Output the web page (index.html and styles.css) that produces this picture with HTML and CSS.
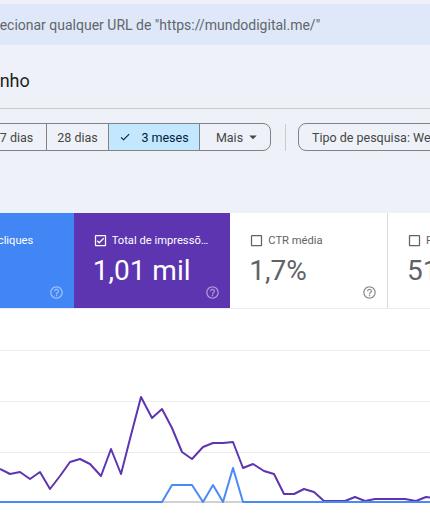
FILE: index.html
```html
<!DOCTYPE html>
<html lang="pt">
<head>
<meta charset="utf-8">
<title>Desempenho</title>
<link rel="stylesheet" href="styles.css">
</head>
<body>
<div class="page">
  <div class="url-bar">
    <span class="url-text">Inspecionar qualquer URL de "https://mundodigital.me/"</span>
  </div>

  <h1 class="title">Desempenho</h1>
  <div class="divider"></div>

  <div class="filters">
    <div class="segmented">
      <div class="seg seg-1">7 dias</div>
      <div class="seg seg-2">28 dias</div>
      <div class="seg seg-3 selected">
        <svg class="seg-check" viewBox="0 0 24 24"><path d="M9 16.17L4.83 12l-1.42 1.41L9 19 21 7l-1.41-1.41z"/></svg>
        <span>3 meses</span>
      </div>
      <div class="seg seg-4">
        <span>Mais</span>
        <svg class="seg-arrow" viewBox="0 0 24 24"><path d="M7 10l5 5 5-5z"/></svg>
      </div>
    </div>
    <div class="vdivider"></div>
    <div class="chip">Tipo de pesquisa: Web</div>
  </div>

  <div class="panel">
    <div class="cards">
      <div class="card card-clicks">
        <div class="card-label">
          <svg class="cb" viewBox="0 0 24 24"><path d="M19 3H5c-1.11 0-2 .9-2 2v14c0 1.1.89 2 2 2h14c1.11 0 2-.9 2-2V5c0-1.1-.89-2-2-2zm0 16H5V5h14v14zM17.99 9l-1.41-1.42-6.59 6.59-2.58-2.57-1.42 1.41 4 3.99z"/></svg>
          <span class="label-text">Total de cliques</span>
        </div>
        <div class="card-value">17</div>
        <svg class="help" viewBox="0 0 24 24"><path d="M11 18h2v-2h-2v2zm1-16C6.480 2 2 6.48 2 12s4.48 10 10 10 10-4.48 10-10S17.52 2 12 2zm0 18c-4.41 0-8-3.59-8-8s3.59-8 8-8 8 3.59 8 8-3.59 8-8 8zm0-14c-2.21 0-4 1.79-4 4h2c0-1.1.9-2 2-2s2 .9 2 2c0 2-3 1.75-3 5h2c0-2.250 3-2.5 3-5 0-2.21-1.79-4-4-4z"/></svg>
      </div>
      <div class="card card-impr">
        <div class="card-label">
          <svg class="cb" viewBox="0 0 24 24"><path d="M19 3H5c-1.11 0-2 .9-2 2v14c0 1.1.89 2 2 2h14c1.11 0 2-.9 2-2V5c0-1.1-.89-2-2-2zm0 16H5V5h14v14zM17.99 9l-1.41-1.42-6.59 6.59-2.58-2.57-1.42 1.41 4 3.99z"/></svg>
          <span class="label-text">Total de impressões</span>
        </div>
        <div class="card-value">1,01 mil</div>
        <svg class="help" viewBox="0 0 24 24"><path d="M11 18h2v-2h-2v2zm1-16C6.48 2 2 6.48 2 12s4.48 10 10 10 10-4.48 10-10S17.52 2 12 2zm0 18c-4.41 0-8-3.59-8-8s3.59-8 8-8 8 3.59 8 8-3.59 8-8 8zm0-14c-2.21 0-4 1.79-4 4h2c0-1.1.9-2 2-2s2 .9 2 2c0 2-3 1.75-3 5h2c0-2.25 3-2.5 3-5 0-2.21-1.79-4-4-4z"/></svg>
      </div>
      <div class="card card-ctr">
        <div class="card-label">
          <svg class="cb" viewBox="0 0 24 24"><path d="M19 5v14H5V5h14m0-2H5c-1.1 0-2 .9-2 2v14c0 1.1.9 2 2 2h14c1.1 0 2-.9 2-2V5c0-1.1-.9-2-2-2z"/></svg>
          <span class="label-text">CTR média</span>
        </div>
        <div class="card-value">1,7%</div>
        <svg class="help" viewBox="0 0 24 24"><path d="M11 18h2v-2h-2v2zm1-16C6.48 2 2 6.48 2 12s4.48 10 10 10 10-4.48 10-10S17.52 2 12 2zm0 18c-4.41 0-8-3.59-8-8s3.59-8 8-8 8 3.59 8 8-3.59 8-8 8zm0-14c-2.21 0-4 1.79-4 4h2c0-1.1.9-2 2-2s2 .9 2 2c0 2-3 1.75-3 5h2c0-2.25 3-2.5 3-5 0-2.21-1.79-4-4-4z"/></svg>
      </div>
      <div class="card card-pos">
        <div class="card-label">
          <svg class="cb" viewBox="0 0 24 24"><path d="M19 5v14H5V5h14m0-2H5c-1.1 0-2 .9-2 2v14c0 1.1.9 2 2 2h14c1.1 0 2-.9 2-2V5c0-1.1-.9-2-2-2z"/></svg>
          <span class="label-text">Posição média</span>
        </div>
        <div class="card-value">51,7</div>
        <svg class="help" viewBox="0 0 24 24"><path d="M11 18h2v-2h-2v2zm1-16C6.48 2 2 6.48 2 12s4.48 10 10 10 10-4.48 10-10S17.52 2 12 2zm0 18c-4.41 0-8-3.59-8-8s3.59-8 8-8 8 3.59 8 8-3.59 8-8 8zm0-14c-2.21 0-4 1.79-4 4h2c0-1.1.9-2 2-2s2 .9 2 2c0 2-3 1.75-3 5h2c0-2.25 3-2.5 3-5 0-2.21-1.79-4-4-4z"/></svg>
      </div>
    </div>

    <div class="chart">
      <svg class="chart-svg" viewBox="0 0 430 207" width="430" height="207">
        <g class="grid">
          <line x1="0" y1="41.5" x2="430" y2="41.5"/>
          <line x1="0" y1="92.5" x2="430" y2="92.5"/>
          <line x1="0" y1="143.5" x2="430" y2="143.5"/>
        </g>
        <line class="axis" x1="0" y1="193" x2="430" y2="193"/>
        <polyline class="line-impr" points="0,160 10,165 20,163 30,170 40,163 50,180 60,167 70,153 80,150 90,155 101,167 111,140 121,165 131,126 141,88 152,109 162,100 172,119 182,143 192,150 203,138 213,134 223,134 233,133 243,159 253,155 264,162 274,165 284,185 294,185 304,180 314,183 324,192 334,192 345,192 355,188 365,192 375,190 385,190 395,190 405,190 416,192 426,188 436,189"/>
        <polyline class="line-clicks" points="0,193 162,193 172,176 182,176 192,176 203,193 213,176 223,193 233,159 243,193 430,193"/>
      </svg>
    </div>
  </div>
</div>
</body>
</html>
```

FILE: styles.css
```css
html, body {
  margin: 0;
  padding: 0;
  width: 430px;
  height: 516px;
  overflow: hidden;
}

body {
  background: #eef2f8;
  font-family: Roboto, "Liberation Sans", Arial, sans-serif;
  color: #1f1f1f;
}

.page {
  width: 430px;
  height: 516px;
  overflow: hidden;
}

/* URL inspection bar */
.url-bar {
  margin-top: 4px;
  height: 41px;
  background: #dfe8f9;
  display: flex;
  align-items: center;
  overflow: hidden;
  white-space: nowrap;
}

.url-text {
  margin-left: -27px;
  font-size: 14px;
  color: #62666b;
}

/* Title */
.title {
  margin: 24px 0 0 -76px;
  font-size: 18px;
  line-height: 24px;
  font-weight: 400;
  color: #1f1f1f;
  white-space: nowrap;
}

.divider {
  margin-top: 15px;
  height: 1px;
  background: #c9cccf;
}

/* Filters row */
.filters {
  margin-top: 14px;
  display: flex;
  align-items: center;
  height: 28px;
  white-space: nowrap;
}

.segmented {
  margin-left: -14px;
  display: flex;
  height: 28px;
  box-sizing: border-box;
  border: 1px solid #7f8286;
  border-radius: 8px;
  overflow: hidden;
  flex: none;
}

.seg {
  box-sizing: border-box;
  height: 26px;
  display: flex;
  align-items: center;
  justify-content: center;
  font-size: 12.5px;
  color: #444746;
  flex: none;
}

.seg + .seg {
  border-left: 1px solid #7f8286;
}

.seg-1 { width: 59px; }
.seg-2 { width: 62px; }
.seg-3 { width: 91px; }
.seg-4 { width: 71px; }

.seg.selected {
  background: #c2e7ff;
  color: #001d35;
}

.seg-check {
  width: 12px;
  height: 12px;
  fill: #001d35;
  margin-right: 10px;
}

.seg-arrow {
  width: 18px;
  height: 18px;
  fill: #444746;
  margin-left: 1px;
  margin-right: -8px;
}

.vdivider {
  margin-left: 14px;
  width: 1px;
  height: 27px;
  background: #c9cccf;
  flex: none;
}

.chip {
  margin-left: 12px;
  box-sizing: border-box;
  height: 28px;
  border: 1px solid #7f8286;
  border-radius: 8px;
  padding: 0 12px 0 13px;
  display: flex;
  align-items: center;
  font-size: 12.5px;
  color: #444746;
  flex: none;
}

/* Panel with cards and chart */
.panel {
  margin-top: 62px;
  background: #ffffff;
}

.cards {
  display: flex;
  margin-left: -83px;
  height: 95px;
  border-bottom: 1px solid #ebebeb;
}

.card {
  box-sizing: border-box;
  width: 156.67px;
  flex: none;
  height: 95px;
  padding: 20px 10px 8px 19px;
  display: flex;
  flex-direction: column;
}

.card-clicks {
  background: #4285f4;
  color: #ffffff;
}

.card-impr {
  background: #5e35b1;
  color: #ffffff;
}

.card-ctr {
  background: #ffffff;
  color: #5f6368;
}

.card-pos {
  background: #ffffff;
  color: #5f6368;
  border-left: 1px solid #dadce0;
}

.card-label {
  display: flex;
  align-items: center;
  height: 15px;
  gap: 4px;
  min-width: 0;
  padding-right: 12px;
}

.cb {
  width: 15px;
  height: 15px;
  flex: none;
  fill: currentColor;
}

.label-text {
  font-size: 11.2px;
  line-height: 15px;
  white-space: nowrap;
  overflow: hidden;
  text-overflow: ellipsis;
  min-width: 0;
}

.card-value {
  margin-top: 7px;
  font-size: 28px;
  line-height: 32px;
  white-space: nowrap;
}

.help {
  margin-top: -2px;
  align-self: flex-end;
  width: 15px;
  height: 15px;
  flex: none;
}

.card-clicks .help,
.card-impr .help {
  fill: rgba(255, 255, 255, 0.5);
}

.card-ctr .help,
.card-pos .help {
  fill: #8a8d91;
}

/* Chart */
.chart {
  height: 207px;
  background: #ffffff;
}

.chart-svg {
  display: block;
}

.grid line {
  stroke: #ececec;
  stroke-width: 1;
}

.axis {
  stroke: #a0a3a7;
  stroke-width: 1;
}

.line-impr {
  fill: none;
  stroke: #5e35b1;
  stroke-width: 2;
  stroke-linejoin: round;
}

.line-clicks {
  fill: none;
  stroke: #4a8af4;
  stroke-width: 2;
  stroke-linejoin: round;
}
```
